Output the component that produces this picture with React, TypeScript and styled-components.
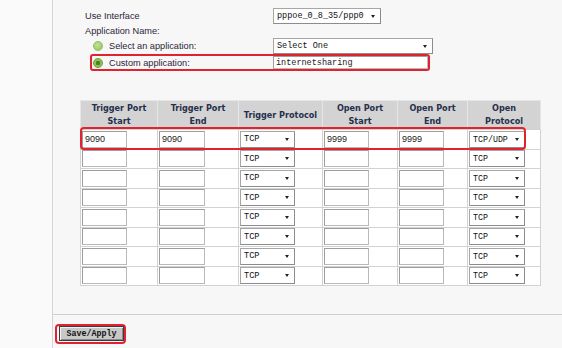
import React from "react";
import styled, { createGlobalStyle } from "styled-components";

const GlobalStyle = createGlobalStyle`
  html, body { margin: 0; padding: 0; background: #f7f7f7; }
  body {
    width: 562px;
    height: 348px;
    overflow: hidden;
    font-family: "Liberation Sans", Arial, sans-serif;
  }
`;

const Page = styled.div`
  display: flex;
  height: 348px;
`;

const Sidebar = styled.div`
  width: 52px;
  flex: none;
  background: #fafafa;
  border-right: 1px solid #d4d4d4;
`;

const Main = styled.div`
  flex: 1;
  display: flex;
  flex-direction: column;
  padding-top: 8px;
`;

const Form = styled.div`
  display: flex;
  flex-direction: column;
  padding-left: 32px;
`;

const FormRow = styled.div<{ $h: number }>`
  display: flex;
  align-items: center;
  height: ${(p) => p.$h}px;
`;

const Label = styled.div<{ $w?: number; $indent?: number }>`
  box-sizing: border-box;
  width: ${(p) => (p.$w ? `${p.$w}px` : "auto")};
  padding-left: ${(p) => p.$indent ?? 0}px;
  display: flex;
  align-items: center;
  gap: 6px;
  font-size: 9.2px;
  color: #2d2438;
  white-space: nowrap;
`;

const Radio = styled.span<{ $checked?: boolean }>`
  box-sizing: border-box;
  width: 10px;
  height: 10px;
  border-radius: 50%;
  flex: none;
  background: ${(p) =>
    p.$checked
      ? "radial-gradient(circle, #4a8422 0 2px, #8fc05a 2.5px)"
      : "radial-gradient(circle at 40% 35%, #c2e294, #92c35c)"};
  border: 1px solid ${(p) => (p.$checked ? "#6a9e3c" : "#8fbd5c")};
`;

const Select = styled.div<{ $w: number; $h: number; $fs?: number }>`
  box-sizing: border-box;
  width: ${(p) => p.$w}px;
  height: ${(p) => p.$h}px;
  display: flex;
  align-items: center;
  justify-content: space-between;
  padding: 0 5px 0 3px;
  background: #fff;
  border: 1px solid #a6a6a6;
  border-right-color: #8c8c8c;
  border-bottom-color: #8c8c8c;
  font-family: "Liberation Mono", "Courier New", monospace;
  font-size: ${(p) => p.$fs ?? 8.5}px;
  color: #111;
  white-space: nowrap;
  &::after {
    content: "";
    border-left: 2.5px solid transparent;
    border-right: 2.5px solid transparent;
    border-top: 3px solid #222;
  }
`;

const CustomBox = styled.div`
  box-sizing: border-box;
  display: flex;
  align-items: center;
  height: 17px;
  width: 340px;
  margin-left: 5px;
  border: 2px solid #e0232e;
  border-radius: 3px;
`;

const TextInput = styled.div<{ $w: number; $h: number; $mono?: boolean }>`
  box-sizing: border-box;
  width: ${(p) => p.$w}px;
  height: ${(p) => p.$h}px;
  display: flex;
  align-items: center;
  padding-left: 2px;
  background: #fff;
  border: 1px solid #b9b9b9;
  border-top-color: #9d9d9d;
  border-left-color: #9d9d9d;
  font-family: ${(p) =>
    p.$mono ? `"Liberation Mono", "Courier New", monospace` : `"Liberation Sans", Arial, sans-serif`};
  font-size: ${(p) => (p.$mono ? 8.5 : 9)}px;
  color: #222;
  white-space: nowrap;
`;

const TableWrap = styled.div`
  position: relative;
  margin: 29px 0 0 27px;
  width: 460px;
`;

const Table = styled.table`
  border-collapse: collapse;
  table-layout: fixed;
  width: 460px;
`;

const HeadCell = styled.th`
  height: 28px;
  padding: 0 2px;
  background: #d3d3d3;
  border: 1px solid #e6e6e6;
  border-bottom-color: #d3d3d3;
  font-family: "DejaVu Sans Condensed", "DejaVu Sans", sans-serif;
  font-stretch: condensed;
  font-weight: bold;
  font-size: 9px;
  line-height: 13px;
  color: #25304c;
  text-align: center;
  vertical-align: middle;
`;

const Row = styled.tr`
  height: 19.5px;
`;

const Cell = styled.td`
  padding: 0 0 0 1px;
  background: #fff;
  border: 1px solid #d2d2d2;
  vertical-align: middle;
`;

const RowHighlight = styled.div`
  position: absolute;
  left: 0;
  top: 27px;
  width: 446px;
  height: 23px;
  box-sizing: border-box;
  border: 2px solid #e0232e;
  border-radius: 4px;
  pointer-events: none;
`;

const Footer = styled.div`
  margin-top: 28px;
  border-top: 1px solid #cfcfcf;
  padding: 7px 0 0 2px;
`;

const ButtonFrame = styled.div`
  display: inline-flex;
  box-sizing: border-box;
  padding: 0 0 1px 2px;
  border: 2px solid #e0232e;
  border-radius: 4px;
`;

const Button = styled.button`
  box-sizing: border-box;
  width: 65px;
  height: 15px;
  padding: 0;
  background: #c8c8c8;
  border: 1px solid #3c3c3c;
  box-shadow: inset 1px 1px 0 #f0f0f0, inset -1px -1px 0 #8a8a8a;
  font-family: "Liberation Mono", "Courier New", monospace;
  font-weight: bold;
  font-size: 8.3px;
  color: #111;
`;

type RowData = {
  tStart: string;
  tEnd: string;
  tProto: string;
  oStart: string;
  oEnd: string;
  oProto: string;
};

const rows: RowData[] = [
  { tStart: "9090", tEnd: "9090", tProto: "TCP", oStart: "9999", oEnd: "9999", oProto: "TCP/UDP" },
  ...Array.from({ length: 7 }, () => ({
    tStart: "",
    tEnd: "",
    tProto: "TCP",
    oStart: "",
    oEnd: "",
    oProto: "TCP",
  })),
];

const colWidths = [77, 81, 84, 75, 70, 73];

export default function App() {
  return (
    <>
      <GlobalStyle />
      <Page>
        <Sidebar />
        <Main>
          <Form>
            <FormRow $h={16}>
              <Label $w={188}>Use Interface</Label>
              <Select $w={108} $h={16}>pppoe_0_8_35/ppp0</Select>
            </FormRow>
            <FormRow $h={14}>
              <Label>Application Name:</Label>
            </FormRow>
            <FormRow $h={16}>
              <Label $w={188} $indent={8}>
                <Radio />
                Select an application:
              </Label>
              <Select $w={160} $h={16}>Select One</Select>
            </FormRow>
            <CustomBox>
              <Label $w={181} $indent={1}>
                <Radio $checked />
                Custom application:
              </Label>
              <TextInput $w={155} $h={13} $mono>
                internetsharing
              </TextInput>
            </CustomBox>
          </Form>

          <TableWrap>
            <Table>
              <colgroup>
                {colWidths.map((w, i) => (
                  <col key={i} style={{ width: w }} />
                ))}
              </colgroup>
              <thead>
                <tr>
                  <HeadCell>Trigger Port<br />Start</HeadCell>
                  <HeadCell>Trigger Port<br />End</HeadCell>
                  <HeadCell>Trigger Protocol</HeadCell>
                  <HeadCell>Open Port<br />Start</HeadCell>
                  <HeadCell>Open Port<br />End</HeadCell>
                  <HeadCell>Open<br />Protocol</HeadCell>
                </tr>
              </thead>
              <tbody>
                {rows.map((r, i) => (
                  <Row key={i}>
                    <Cell><TextInput $w={45} $h={17}>{r.tStart}</TextInput></Cell>
                    <Cell><TextInput $w={46} $h={17}>{r.tEnd}</TextInput></Cell>
                    <Cell><Select $w={55} $h={17} $fs={8.6}>{r.tProto}</Select></Cell>
                    <Cell><TextInput $w={45} $h={17}>{r.oStart}</TextInput></Cell>
                    <Cell><TextInput $w={45} $h={17}>{r.oEnd}</TextInput></Cell>
                    <Cell><Select $w={56} $h={17} $fs={8.3}>{r.oProto}</Select></Cell>
                  </Row>
                ))}
              </tbody>
            </Table>
            <RowHighlight />
          </TableWrap>

          <Footer>
            <ButtonFrame>
              <Button>Save/Apply</Button>
            </ButtonFrame>
          </Footer>
        </Main>
      </Page>
    </>
  );
}
